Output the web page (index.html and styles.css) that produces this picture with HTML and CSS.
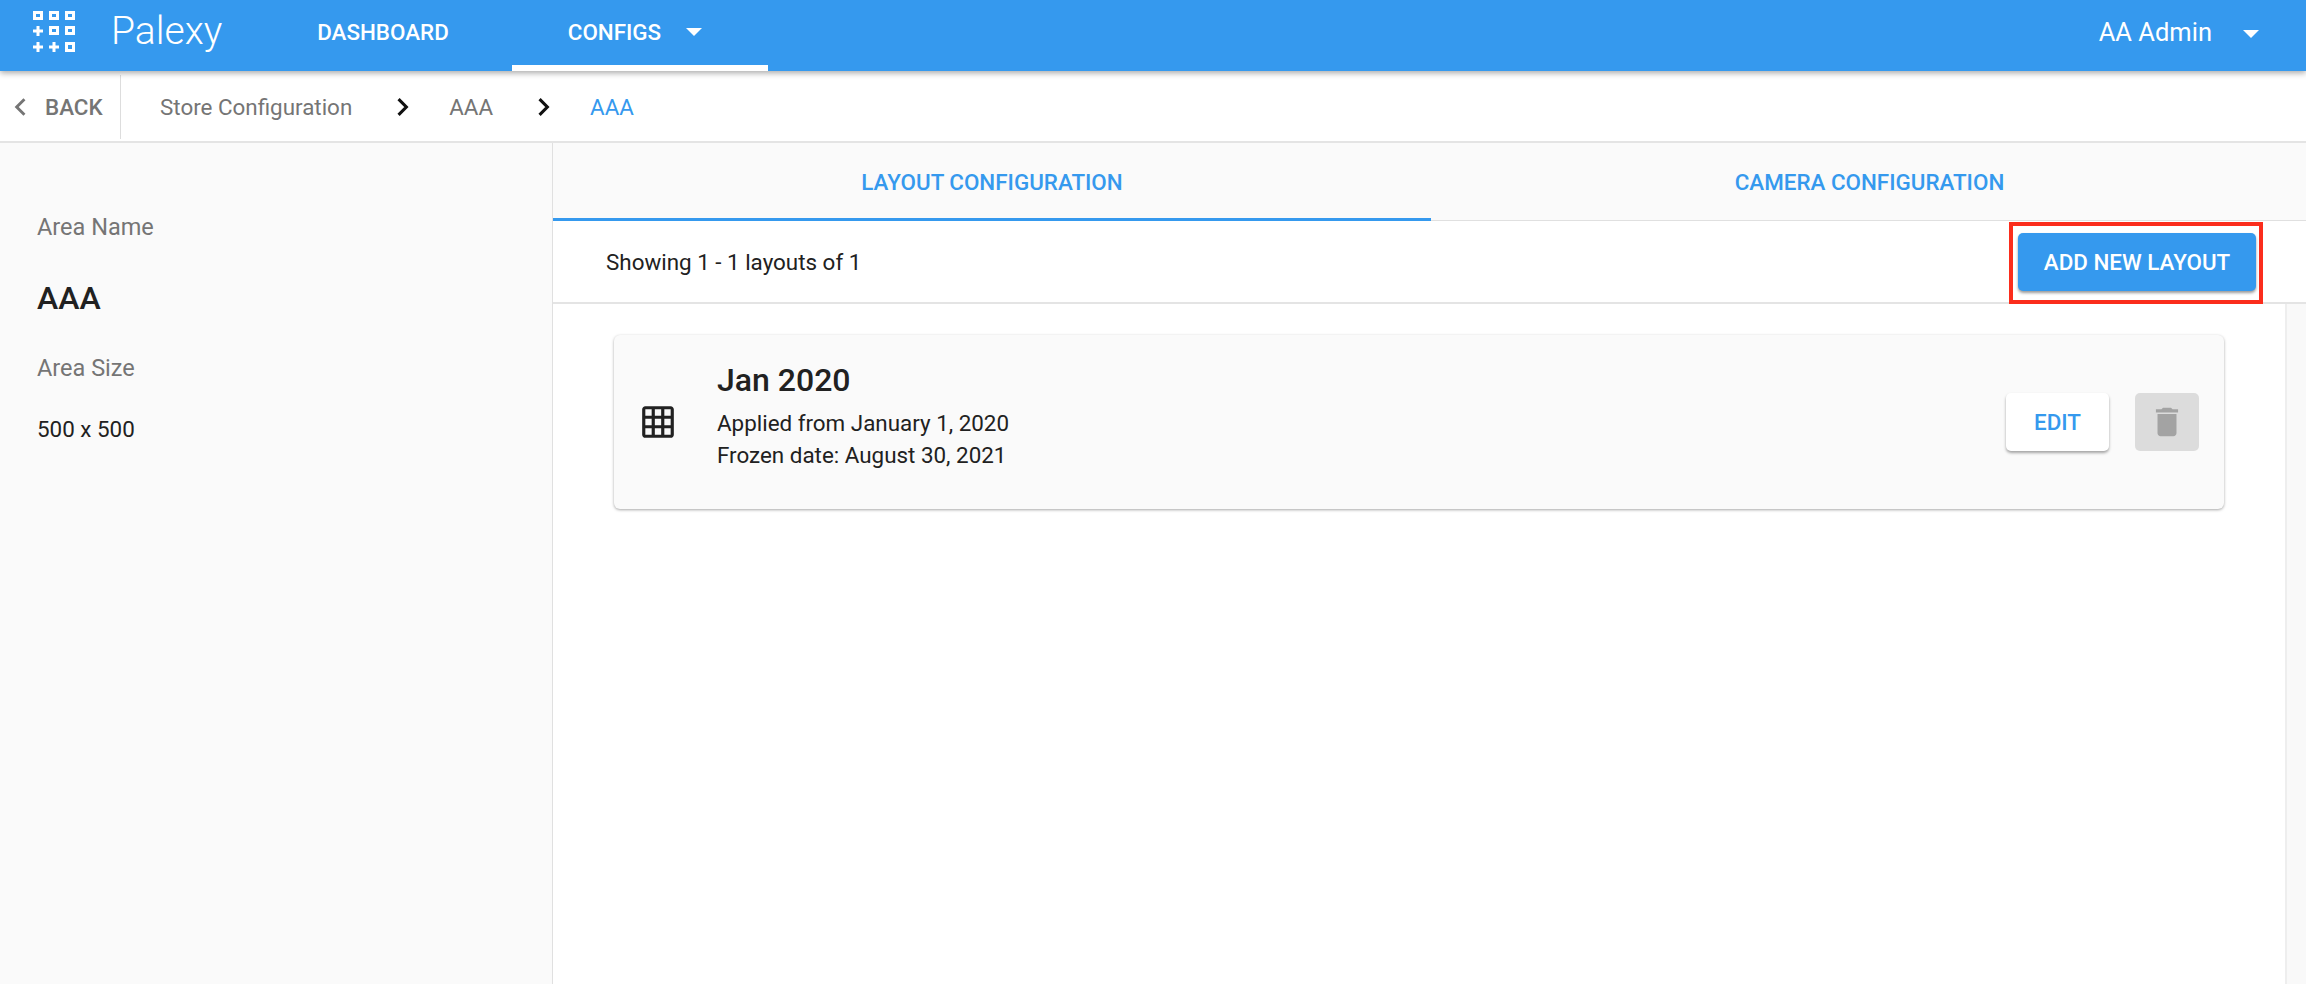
FILE: index.html
```html
<!DOCTYPE html>
<html lang="en">
<head>
    <meta charset="UTF-8">
    <title>Palexy - Store Configuration</title>
    <link rel="stylesheet" href="styles.css">
</head>
<body>
    <header class="topbar">
        <svg class="logo" viewBox="0 0 42 42" fill="#fff">
            <path fill-rule="evenodd" d="M0 1h10v9H0zM3 4v3h4V4zM16 1h10v9H16zM19 4v3h4V4zM32 1h10v9H32zM35 4v3h4V4z"/>
            <path fill-rule="evenodd" d="M16 16h10v9H16zM19 19v3h4v-3zM32 16h10v9H32zM35 19v3h4v-3zM32 32h10v10H32zM35 35v4h4v-4z"/>
            <path d="M3.500 16h3v3.500H10v3H6.500V26h-3v-3.500H0v-3h3.500zM3.500 32h3v3.500H10v3H6.500V42h-3v-3.500H0v-3h3.500zM19.500 32h3v3.500H26v3h-3.500V42h-3v-3.500H16v-3h3.500z"/>
        </svg>
        <span class="brand">Palexy</span>
        <nav class="nav">
            <a class="nav-item">DASHBOARD</a>
            <a class="nav-item active">CONFIGS <i class="caret"></i></a>
        </nav>
        <div class="user">AA Admin <i class="caret"></i></div>
    </header>

    <div class="crumbs">
        <a class="back">
            <svg class="back-icon" viewBox="0 0 12 18"><path d="M10 2 3 9l7 7" fill="none" stroke="#757575" stroke-width="2.600"/></svg>
            BACK
        </a>
        <span class="crumb first">Store Configuration</span>
        <svg class="sep" viewBox="0 0 12 18"><path d="M2 2l7 7-7 7" fill="none" stroke="#111" stroke-width="2.800"/></svg>
        <span class="crumb">AAA</span>
        <svg class="sep" viewBox="0 0 12 18"><path d="M2 2l7 7-7 7" fill="none" stroke="#111" stroke-width="2.800"/></svg>
        <span class="crumb current">AAA</span>
    </div>

    <div class="main">
        <aside class="side">
            <div class="side-label">Area Name</div>
            <div class="side-name">AAA</div>
            <div class="side-label size">Area Size</div>
            <div class="side-value">500 x 500</div>
        </aside>

        <section class="content">
            <div class="tabs">
                <div class="tab active">LAYOUT CONFIGURATION</div>
                <div class="tab">CAMERA CONFIGURATION</div>
            </div>
            <div class="toolbar">
                <span class="count">Showing 1 - 1 layouts of 1</span>
                <div class="highlight">
                    <button class="btn-add">ADD NEW LAYOUT</button>
                </div>
            </div>
            <div class="list-wrap">
                <div class="list">
                    <div class="card">
                        <svg class="grid-icon" viewBox="0 0 24 24" fill="#212121">
                            <path d="M20 2H4c-1.100 0-2 .9-2 2v16c0 1.100.9 2 2 2h16c1.100 0 2-.9 2-2V4c0-1.100-.9-2-2-2zM8 20H4v-4h4v4zm0-6H4v-4h4v4zm0-6H4V4h4v4zm6 12h-4v-4h4v4zm0-6h-4v-4h4v4zm0-6h-4V4h4v4zm6 12h-4v-4h4v4zm0-6h-4v-4h4v4zm0-6h-4V4h4v4z"/>
                        </svg>
                        <div class="card-info">
                            <div class="card-title">Jan 2020</div>
                            <div class="card-line">Applied from January 1, 2020</div>
                            <div class="card-line">Frozen date: August 30, 2021</div>
                        </div>
                        <button class="btn-edit">EDIT</button>
                        <button class="btn-delete">
                            <svg viewBox="0 0 24 24" fill="#a3a3a3"><path d="M6 19c0 1.100.9 2 2 2h8c1.100 0 2-.9 2-2V7H6v12zM19 4h-3.500l-1-1h-5l-1 1H5v2h14V4z"/></svg>
                        </button>
                    </div>
                </div>
                <div class="scroll-track"></div>
            </div>
        </section>
    </div>
</body>
</html>
```

FILE: styles.css
```css
* { box-sizing: border-box; }
html, body { height: 100%; }
body { margin: 0; height: 984px; overflow: hidden; display: flex; flex-direction: column; background: #fff; color: #212121; font-family: Roboto, "Liberation Sans", sans-serif; font-size: 22.4px; }
button { font-family: inherit; border: 0; cursor: pointer; }

.topbar { position: relative; z-index: 2; flex: none; height: 71px; display: flex; align-items: center; padding: 0 47px 0 33px; background: #3599ee; color: #fff; box-shadow: 0 2px 6px rgba(0, 0, 0, .35); }
.logo { width: 42px; height: 42px; margin-bottom: 9px; }
.brand { margin-left: 36px; font-size: 39px; font-weight: 300; margin-bottom: 9px; }
.nav { display: flex; height: 100%; margin-left: 95px; }
.nav-item { display: flex; align-items: center; height: 100%; padding: 0 0 8px 0; font-weight: 500; }
.nav-item:first-child { margin-right: 63px; }
.nav-item.active { width: 256px; padding: 0 0 2px 56px; border-bottom: 6px solid #fff; }
.caret { display: inline-block; width: 0; height: 0; margin-left: 25px; border-left: 8px solid transparent; border-right: 8px solid transparent; border-top: 8px solid #fff; }
.user { margin-left: auto; display: flex; align-items: center; margin-bottom: 7px; font-size: 25.5px; }
.user .caret { margin-left: 31px; margin-top: 3px; }

.crumbs { flex: none; height: 72px; display: flex; align-items: center; padding-top: 1px; border-bottom: 2px solid #e4e4e4; color: #757575; }
.back { display: flex; align-items: center; width: 121px; height: 64px; padding-left: 13px; border-right: 1px solid #ddd; font-weight: 500; }
.back-icon { width: 14px; height: 20px; margin-right: 18px; }
.crumb.first { margin-left: 39px; }
.sep { width: 14px; height: 20px; margin: 0 39px 0 44px; }
.crumb.current { color: #3599ee; }

.main { flex: 1; display: flex; min-height: 0; }
.side { flex: none; width: 553px; padding: 69px 0 0 37px; background: #fafafa; border-right: 1px solid #e0e0e0; }
.side-label { color: #757575; font-size: 23.5px; line-height: 30px; }
.side-name { margin-top: 37px; font-size: 32px; font-weight: 500; line-height: 38px; }
.side-label.size { margin-top: 36px; }
.side-value { margin-top: 31px; line-height: 30px; }

.content { flex: 1; min-width: 0; display: flex; flex-direction: column; }
.tabs { flex: none; height: 78px; display: flex; background: #fafafa; }
.tab { flex: 1; display: flex; align-items: center; justify-content: center; padding: 1px 0 0 2px; color: #3599ee; font-weight: 500; border-bottom: 1px solid #e0e0e0; }
.tab.active { flex: none; width: 878px; padding: 3px 0 0; border-bottom: 3px solid #3599ee; }
.toolbar { flex: none; height: 83px; display: flex; align-items: flex-start; justify-content: space-between; padding: 1px 43px 0 53px; border-bottom: 2px solid #e4e4e4; }
.count { line-height: 81px; }
.highlight { padding: 7px 3px 9px 5px; border: 4px solid #fb2d1c; }
.btn-add { display: block; width: 238px; height: 58px; border-radius: 5px; background: #3599ee; color: #fff; font-size: 22.4px; font-weight: 500; box-shadow: 0 2px 3px rgba(0, 0, 0, .4); }

.list-wrap { flex: 1; display: flex; min-height: 0; }
.list { flex: 1; padding: 31px 61px 0 61px; }
.card { height: 174px; display: flex; align-items: center; padding: 0 25px 0 25px; background: #fafafa; border-radius: 6px; box-shadow: 0 1px 3px rgba(0, 0, 0, .35); }
.grid-icon { flex: none; width: 38px; height: 38px; }
.card-info { flex: 1; margin-left: 40px; padding-bottom: 16px; }
.card-title { font-size: 32px; font-weight: 500; line-height: 44px; margin-bottom: 5px; }
.card-line { line-height: 32px; }
.btn-edit { width: 103px; height: 58px; border-radius: 5px; background: #fff; color: #3599ee; font-size: 22.4px; font-weight: 500; box-shadow: 0 2px 3px rgba(0, 0, 0, .35); }
.btn-delete { width: 64px; height: 58px; margin-left: 26px; display: flex; align-items: center; justify-content: center; padding: 0; border-radius: 5px; background: #dcdcdc; }
.btn-delete svg { width: 38px; height: 38px; }
.scroll-track { flex: none; width: 21px; background: #f9f9f9; border-left: 2px solid #eee; }
```
